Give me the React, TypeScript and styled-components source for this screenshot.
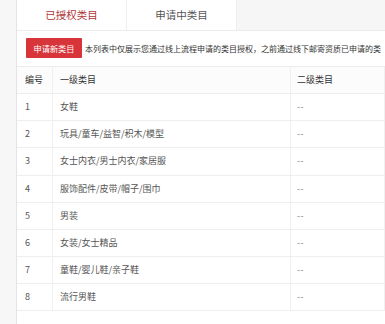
import React from "react";
import styled, { createGlobalStyle } from "styled-components";

const Global = createGlobalStyle`
  html, body { margin: 0; padding: 0; background: #f7f7f7; }
  body { font-family: "Noto Sans CJK SC", "Noto Sans", sans-serif; }
`;

const Page = styled.div`
  width: 385px;
  height: 324px;
  overflow: hidden;
  padding-left: 16px;
  box-sizing: border-box;
`;

const Panel = styled.div`
  height: 100%;
  background: #fff;
  border-left: 1px solid #e4e4e4;
  overflow: hidden;
`;

const Tabs = styled.div`
  display: flex;
  height: 31px;
  background: #f6f6f6;
  border-bottom: 1px solid #ececec;
  box-sizing: border-box;
`;

const Tab = styled.div<{ $active?: boolean }>`
  width: 110px;
  flex: none;
  display: flex;
  align-items: center;
  justify-content: center;
  background: #fff;
  border-right: 1px solid #efefef;
  font-size: 10.5px;
  color: ${(p) => (p.$active ? "#b0363a" : "#555")};
  padding-bottom: 2px;
  box-sizing: border-box;
`;

const Toolbar = styled.div`
  display: flex;
  align-items: center;
  gap: 3px;
  padding: 7px 0 8px 9px;
  white-space: nowrap;
  overflow: hidden;
`;

const Button = styled.button`
  flex: none;
  height: 20px;
  width: 56px;
  padding: 0;
  border: none;
  border-radius: 1px;
  background: #d8353a;
  color: #fff;
  font-family: inherit;
  font-size: 8.2px;
`;

const Note = styled.span`
  font-size: 8px;
  color: #333;
`;

const Table = styled.div`
  border-top: 1px solid #ececec;
`;

const Row = styled.div<{ $head?: boolean }>`
  display: grid;
  grid-template-columns: 36px 238px 1fr;
  height: 27.15px;
  box-sizing: border-box;
  border-bottom: 1px solid #eeeeee;
  background: ${(p) => (p.$head ? "#fcfcfc" : "#fff")};
  color: ${(p) => (p.$head ? "#333" : "#555")};
`;

const Cell = styled.div<{ $pad?: number }>`
  display: flex;
  align-items: center;
  padding-left: ${(p) => p.$pad ?? 7}px;
  font-size: 9px;
  border-right: 1px solid #f0f0f0;
  white-space: nowrap;
  overflow: hidden;
  padding-bottom: 1px;
`;

const Dash = styled.span`
  color: #888;
  letter-spacing: 0.5px;
`;

const rows = [
  "女鞋",
  "玩具/童车/益智/积木/模型",
  "女士内衣/男士内衣/家居服",
  "服饰配件/皮带/帽子/围巾",
  "男装",
  "女装/女士精品",
  "童鞋/婴儿鞋/亲子鞋",
  "流行男鞋",
];

export default function App() {
  return (
    <>
      <Global />
      <Page>
        <Panel>
          <Tabs>
            <Tab $active>已授权类目</Tab>
            <Tab>申请中类目</Tab>
          </Tabs>
          <Toolbar>
            <Button>申请新类目</Button>
            <Note>本列表中仅展示您通过线上流程申请的类目授权，之前通过线下邮寄资质已申请的类</Note>
          </Toolbar>
          <Table>
            <Row $head>
              <Cell $pad={8}>编号</Cell>
              <Cell>一级类目</Cell>
              <Cell $pad={6}>二级类目</Cell>
            </Row>
            {rows.map((name, i) => (
              <Row key={i}>
                <Cell $pad={8}>{i + 1}</Cell>
                <Cell>{name}</Cell>
                <Cell $pad={6}>
                  <Dash>--</Dash>
                </Cell>
              </Row>
            ))}
          </Table>
        </Panel>
      </Page>
    </>
  );
}
